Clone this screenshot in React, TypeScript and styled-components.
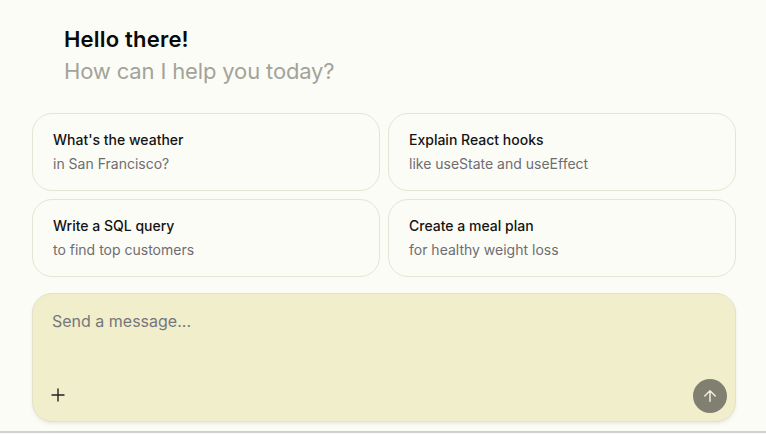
import React from "react";
import styled, { createGlobalStyle } from "styled-components";

const Global = createGlobalStyle`
  html, body {
    margin: 0;
    padding: 0;
    background: #fcfcf6;
    font-family: Inter, "Noto Sans", "Liberation Sans", sans-serif;
    -webkit-font-smoothing: antialiased;
  }
  * { box-sizing: border-box; }
`;

const Page = styled.div`
  height: 434px;
  display: flex;
  flex-direction: column;
  overflow: hidden;
`;

const Main = styled.main`
  flex: 1;
  display: flex;
  flex-direction: column;
  padding: 0 30px 0 32px;
`;

const Greeting = styled.section`
  padding: 23px 32px 0;
  display: flex;
  flex-direction: column;
`;

const Title = styled.h1<{ $muted?: boolean }>`
  margin: 0;
  font-size: 22px;
  line-height: 32px;
  font-weight: ${(p) => (p.$muted ? 400 : 600)};
  color: ${(p) => (p.$muted ? "#a3a39a" : "#0a0a0a")};
  letter-spacing: ${(p) => (p.$muted ? "-0.15px" : "0.2px")};
`;

const Suggestions = styled.div`
  margin-top: 26px;
  display: grid;
  grid-template-columns: 1fr 1fr;
  gap: 8px;
`;

const Card = styled.button`
  display: flex;
  flex-direction: column;
  align-items: flex-start;
  gap: 4px;
  padding: 16px 20px;
  border: 1px solid #e6e4d2;
  border-radius: 20px;
  background: transparent;
  font-family: inherit;
  text-align: left;
  cursor: pointer;
`;

const CardTitle = styled.span`
  font-size: 14px;
  line-height: 20px;
  font-weight: 500;
  color: #141414;
`;

const CardSub = styled.span`
  font-size: 14px;
  line-height: 20px;
  color: #6d6d72;
`;

const Composer = styled.div`
  margin-top: 16px;
  height: 129px;
  border-radius: 20px;
  border: 1px solid #e4e2c8;
  background: #f1eecb;
  box-shadow: 0 2px 3px rgba(120, 120, 110, 0.12);
  display: flex;
  flex-direction: column;
  justify-content: space-between;
  padding: 15px 8px 8px 19px;
`;

const Field = styled.textarea`
  border: none;
  outline: none;
  background: transparent;
  resize: none;
  font-family: inherit;
  font-size: 16px;
  line-height: 24px;
  color: #222;
  padding: 0;
  height: 24px;
  caret-color: #111;
  &::placeholder { color: #76767c; }
`;

const Toolbar = styled.div`
  display: flex;
  align-items: center;
  justify-content: space-between;
`;

const AttachButton = styled.button`
  width: 24px;
  height: 24px;
  margin-left: -6px;
  margin-bottom: 3px;
  border: none;
  background: transparent;
  padding: 0;
  display: flex;
  align-items: center;
  justify-content: center;
  color: #222;
`;

const SendButton = styled.button`
  width: 34px;
  height: 34px;
  border-radius: 50%;
  border: none;
  background: #817f6f;
  display: flex;
  align-items: center;
  justify-content: center;
  color: #eeeee6;
  padding: 0;
`;

const BottomRule = styled.div`
  height: 2px;
  margin-bottom: 1px;
  background: #cfcfd4;
`;

const suggestions = [
  { title: "What's the weather", sub: "in San Francisco?" },
  { title: "Explain React hooks", sub: "like useState and useEffect" },
  { title: "Write a SQL query", sub: "to find top customers" },
  { title: "Create a meal plan", sub: "for healthy weight loss" },
];

export default function App() {
  return (
    <Page>
      <Global />
      <Main>
        <Greeting>
          <Title>Hello there!</Title>
          <Title as="h2" $muted>
            How can I help you today?
          </Title>
        </Greeting>
        <Suggestions>
          {suggestions.map((s) => (
            <Card key={s.title}>
              <CardTitle>{s.title}</CardTitle>
              <CardSub>{s.sub}</CardSub>
            </Card>
          ))}
        </Suggestions>
        <Composer>
          <Field placeholder="Send a message..." autoFocus />
          <Toolbar>
            <AttachButton aria-label="Attach">
              <svg width="14" height="14" viewBox="0 0 14 14" fill="none">
                <path d="M7 1v12M1 7h12" stroke="currentColor" strokeWidth="1.4" strokeLinecap="round" />
              </svg>
            </AttachButton>
            <SendButton aria-label="Send">
              <svg width="18" height="18" viewBox="0 0 24 24" fill="none" stroke="currentColor" strokeWidth="2" strokeLinecap="round" strokeLinejoin="round">
                <path d="M12 19V5M5 12l7-7 7 7" />
              </svg>
            </SendButton>
          </Toolbar>
        </Composer>
      </Main>
      <BottomRule />
    </Page>
  );
}
